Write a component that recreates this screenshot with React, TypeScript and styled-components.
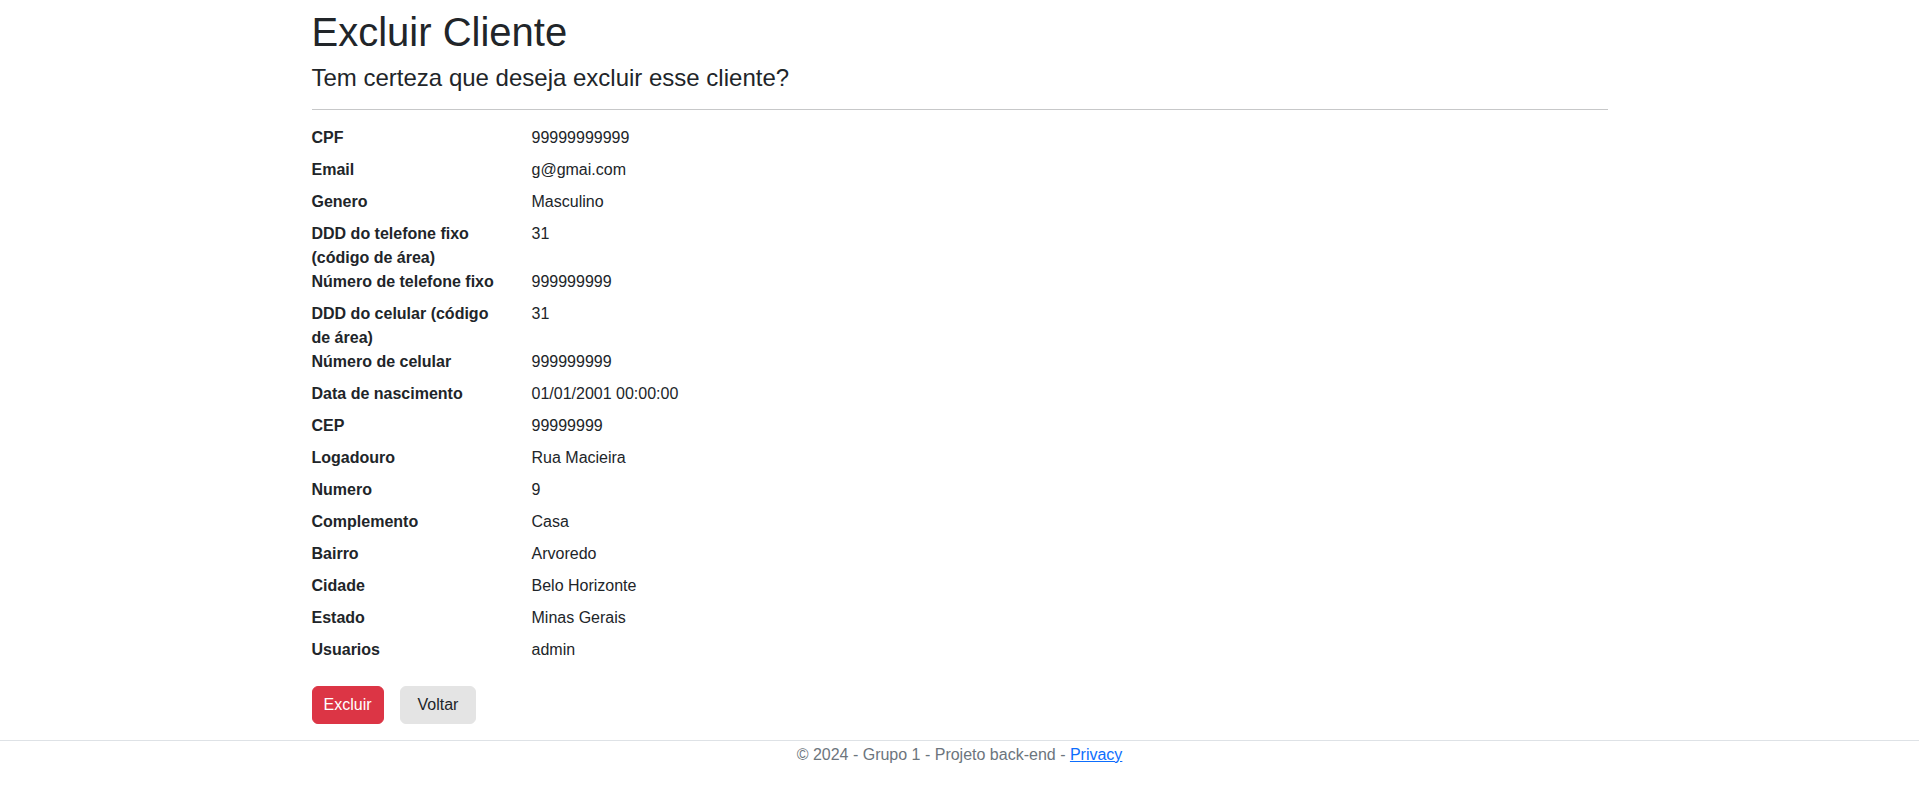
import { Fragment } from "react";
import styled, { createGlobalStyle } from "styled-components";

import type { FC } from "react";

const GUTTER = 24;

const GlobalStyle = createGlobalStyle`
    body {
        margin: 0;
        font-family: "Segoe UI", "Liberation Sans", Arial, sans-serif;
        font-size: 16px;
        line-height: 1.5;
        color: #212529;
        background-color: #fff;
    }
`;

const Container = styled.main`
    max-width: 1296px;
    margin: 0 auto;
    padding: 8px ${GUTTER / 2}px 0;
`;

const Title = styled.h1`
    margin: 0 0 8px;
    font-size: 40px;
    font-weight: 500;
    line-height: 1.2;
`;

const Subtitle = styled.h4`
    margin: 0 0 8px;
    font-size: 24px;
    font-weight: 500;
    line-height: 1.2;
`;

const Divider = styled.hr`
    margin: 16px 0;
    border: 0;
    border-top: 1px solid #212529;
    opacity: .25;
`;

const DetailList = styled.dl`
    display: grid;
    grid-template-columns: ${220 - GUTTER}px 1fr;
    column-gap: ${GUTTER}px;
    margin: 0 0 16px;
`;

const Term = styled.dt`
    margin: 0;
    font-weight: 700;
`;

const Detail = styled.dd`
    margin: 0 0 8px;
`;

const Actions = styled.div`
    display: flex;
    gap: 16px;
`;

const Button = styled.button<{ $variant: "danger" | "light" }>`
    display: inline-block;
    height: 38px;
    padding: 0 ${props => props.$variant === "danger" ? 11 : 17}px;
    border: 1px solid ${props => props.$variant === "danger" ? "#dc3545" : "#e4e4e4"};
    border-radius: 6px;
    background-color: ${props => props.$variant === "danger" ? "#dc3545" : "#e4e4e4"};
    color: ${props => props.$variant === "danger" ? "#fff" : "#212529"};
    font-family: inherit;
    font-size: 16px;
    line-height: 24px;
    cursor: pointer;
`;

const Footer = styled.footer`
    margin-top: 16px;
    border-top: 1px solid #dee2e6;
    padding-top: 2px;
    color: #6c757d;
    text-align: center;
    line-height: 24px;

    a {
        color: #0d6efd;
    }
`;

const cliente: [string, string][] = [
    ["CPF", "99999999999"],
    ["Email", "g@gmai.com"],
    ["Genero", "Masculino"],
    ["DDD do telefone fixo (código de área)", "31"],
    ["Número de telefone fixo", "999999999"],
    ["DDD do celular (código de área)", "31"],
    ["Número de celular", "999999999"],
    ["Data de nascimento", "01/01/2001 00:00:00"],
    ["CEP", "99999999"],
    ["Logadouro", "Rua Macieira"],
    ["Numero", "9"],
    ["Complemento", "Casa"],
    ["Bairro", "Arvoredo"],
    ["Cidade", "Belo Horizonte"],
    ["Estado", "Minas Gerais"],
    ["Usuarios", "admin"],
];

const App: FC = () => (
    <>
        <GlobalStyle />
        <Container>
            <Title>Excluir Cliente</Title>
            <Subtitle>Tem certeza que deseja excluir esse cliente?</Subtitle>
            <Divider />
            <DetailList>
                {cliente.map(([label, value]) => (
                    <Fragment key={label}>
                        <Term>{label}</Term>
                        <Detail>{value}</Detail>
                    </Fragment>
                ))}
            </DetailList>
            <form onSubmit={e => e.preventDefault()}>
                <Actions>
                    <Button type="submit" $variant="danger">Excluir</Button>
                    <Button type="button" $variant="light">Voltar</Button>
                </Actions>
            </form>
        </Container>
        <Footer>
            &copy; 2024 - Grupo 1 - Projeto back-end - <a href="#">Privacy</a>
        </Footer>
    </>
);

export default App;
